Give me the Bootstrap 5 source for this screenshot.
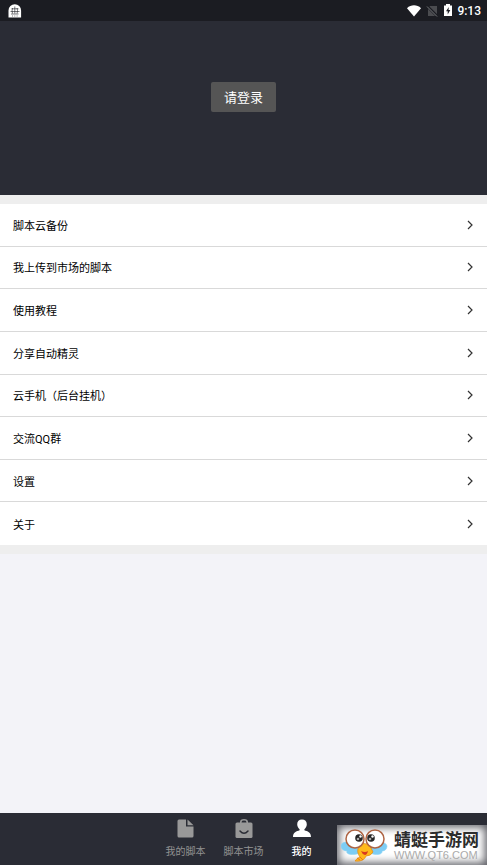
<!DOCTYPE html>
<html lang="zh-CN">
<head>
<meta charset="utf-8">
<meta name="viewport" content="width=device-width, initial-scale=1">
<title>我的</title>
<link href="https://cdn.jsdelivr.net/npm/bootstrap@5.3.0/dist/css/bootstrap.min.css" rel="stylesheet">
<style>
body{font-family:Roboto,"Noto Sans CJK SC",sans-serif;background:#f3f3f8}
.status-bar{height:21px;background:#1b1c22;padding:0 6px 0 8px}
.clock{font-size:12px;font-weight:500;line-height:20px}
.profile{height:174px;background:#2a2c35;padding-top:61px}
.login{background:#555;color:#fff;font-size:13px;line-height:18px;padding:7px 13px 5px;border:0;border-radius:2px}
.login:hover{background:#666;color:#fff}
.menu-band{background:#eeeeee;padding:9px 0}
.menu{display:grid;grid-auto-rows:1fr;min-height:341px}
.menu .menu-row{background:#fff;color:#000;font-size:11px;line-height:16px;padding:0 13px;border:0;border-bottom:1px solid #d9d9d9}
.menu .menu-row:last-child{border-bottom:0}
.tabs{background:#2a2c35;min-height:52px}
.tab-item{width:58px;color:#929292;font-size:10px;line-height:14px;padding-top:6px;gap:7px}
.tab-item.current{color:#fff;font-weight:500}
.brand-mark{right:0;bottom:0;width:150px;height:40px;background:#fff;box-shadow:inset 0 0 8px 2px #55565d;padding-left:4px;gap:5px}
.brand-name{font-size:17px;font-weight:700;line-height:20px;color:#2d2d2d}
.brand-url{font-family:"Liberation Sans",sans-serif;font-size:11px;line-height:11px;color:#aaa}
</style>
<script src="https://cdn.jsdelivr.net/npm/bootstrap@5.3.0/dist/js/bootstrap.bundle.min.js"></script>
</head>
<body class="d-flex flex-column min-vh-100 position-relative">
<header>
  <div class="status-bar d-flex align-items-center justify-content-between text-white">
    <svg width="14" height="14" viewBox="0 0 14 14" aria-hidden="true"><path d="M.5 13.500V6.500a6.300 6.300 0 0 1 12.600 0v7z" fill="#fff"/><path d="M2.500 7.500h9M3.500 4.800h7M6.800 2.500v7M4.500 4q-.8 2.500 0 5.500M9.100 4q.8 2.500 0 5.500M3 10h7.500M4 12h1M6.300 12h1M8.600 12h1" fill="none" stroke="#1b1c22" stroke-width=".6"/></svg>
    <div class="d-flex align-items-center">
      <svg class="me-1" width="14" height="12" viewBox="0 0 14 12" aria-hidden="true"><path d="M0 3.200C4-.6 10-.6 14 3.200L7 11.500z" fill="#fff"/></svg>
      <svg class="me-1" width="14" height="12" viewBox="0 0 14 12" aria-hidden="true"><path d="M5 1h7v10H3V3z" fill="#4b4c50"/><path d="M2 1l10 10" stroke="#1b1c22" stroke-width="2.600"/><path d="M2 1.500l10 10" stroke="#77787b" stroke-width="1"/></svg>
      <svg class="me-1" width="10" height="13" viewBox="0 0 10 13" aria-hidden="true"><path d="M3 0h4v1.500h2V12H1V1.500h2z" fill="#fff"/><path d="M5.800 3L3 7.200h1.700v3.300L7.300 6H5.500z" fill="#1b1c22"/></svg>
      <span class="clock">9:13</span>
    </div>
  </div>
  <div class="profile text-center"><button type="button" class="btn login">请登录</button></div>
</header>
<main class="flex-grow-1">
  <div class="menu-band">
    <nav class="menu" aria-label="功能">
      <a href="#" class="menu-row d-flex align-items-center justify-content-between text-decoration-none"><span class="pt-1">脚本云备份</span><svg width="8" height="10" viewBox="0 0 8 10" aria-hidden="true"><path d="M2 1l4 4-4 4" fill="none" stroke="#333" stroke-width="1.200"/></svg></a>
      <a href="#" class="menu-row d-flex align-items-center justify-content-between text-decoration-none"><span class="pt-1">我上传到市场的脚本</span><svg width="8" height="10" viewBox="0 0 8 10" aria-hidden="true"><path d="M2 1l4 4-4 4" fill="none" stroke="#333" stroke-width="1.200"/></svg></a>
      <a href="#" class="menu-row d-flex align-items-center justify-content-between text-decoration-none"><span class="pt-1">使用教程</span><svg width="8" height="10" viewBox="0 0 8 10" aria-hidden="true"><path d="M2 1l4 4-4 4" fill="none" stroke="#333" stroke-width="1.200"/></svg></a>
      <a href="#" class="menu-row d-flex align-items-center justify-content-between text-decoration-none"><span class="pt-1">分享自动精灵</span><svg width="8" height="10" viewBox="0 0 8 10" aria-hidden="true"><path d="M2 1l4 4-4 4" fill="none" stroke="#333" stroke-width="1.200"/></svg></a>
      <a href="#" class="menu-row d-flex align-items-center justify-content-between text-decoration-none"><span class="pt-1">云手机（后台挂机）</span><svg width="8" height="10" viewBox="0 0 8 10" aria-hidden="true"><path d="M2 1l4 4-4 4" fill="none" stroke="#333" stroke-width="1.200"/></svg></a>
      <a href="#" class="menu-row d-flex align-items-center justify-content-between text-decoration-none"><span class="pt-1">交流QQ群</span><svg width="8" height="10" viewBox="0 0 8 10" aria-hidden="true"><path d="M2 1l4 4-4 4" fill="none" stroke="#333" stroke-width="1.200"/></svg></a>
      <a href="#" class="menu-row d-flex align-items-center justify-content-between text-decoration-none"><span class="pt-1">设置</span><svg width="8" height="10" viewBox="0 0 8 10" aria-hidden="true"><path d="M2 1l4 4-4 4" fill="none" stroke="#333" stroke-width="1.200"/></svg></a>
      <a href="#" class="menu-row d-flex align-items-center justify-content-between text-decoration-none"><span class="pt-1">关于</span><svg width="8" height="10" viewBox="0 0 8 10" aria-hidden="true"><path d="M2 1l4 4-4 4" fill="none" stroke="#333" stroke-width="1.200"/></svg></a>
    </nav>
  </div>
</main>
<nav class="tabs d-flex justify-content-center" aria-label="主导航">
  <a href="#" class="tab-item d-flex flex-column align-items-center text-decoration-none">
    <svg width="20" height="19" viewBox="0 0 20 19" aria-hidden="true"><path d="M3 .5h7v7h7.500V17q0 1.500-1.500 1.500H3Q1.500 18.500 1.500 17V2Q1.500.5 3 .5zM11.500.5l6 5.800h-6z" fill="#999"/></svg>
    我的脚本</a>
  <a href="#" class="tab-item d-flex flex-column align-items-center text-decoration-none">
    <svg width="20" height="19" viewBox="0 0 20 19" aria-hidden="true"><path d="M6.800 4.500V3Q6.800 .8 10 .8T13.200 3v1.500" fill="none" stroke="#999" stroke-width="1.600"/><rect x="1.500" y="3.500" width="17" height="15.500" rx="1.500" fill="#999"/><path d="M6 12q4 4.500 8 0" fill="none" stroke="#2a2c35" stroke-width="1.500" stroke-linecap="round"/></svg>
    脚本市场</a>
  <a href="#" class="tab-item current d-flex flex-column align-items-center text-decoration-none" aria-current="page">
    <svg width="20" height="19" viewBox="0 0 20 19" aria-hidden="true"><path d="M10 .5c3 0 4.800 2 4.800 4.800 0 2-1 3.900-2.400 4.900v1c3 1 6.600 2 6.600 6.800H1c0-4.800 3.600-5.800 6.600-6.800v-1C6.200 9.200 5.200 7.300 5.200 5.300 5.200 2.500 7 .5 10 .5z" fill="#fff"/></svg>
    我的</a>
</nav>
<div class="brand-mark position-absolute d-flex align-items-center">
  <svg class="flex-shrink-0" width="48" height="40" viewBox="0 0 48 40" aria-hidden="true">
    <path d="M20 23C10 15 0 16 0 21c0 3 3 5 6 5-2 4 8 5 15 1zM28 23c8-7 17-7 18-2 0 3-2 5-5 5 1 4-7 5-14 1z" fill="#7dcdf5" stroke="#8fd5f5" stroke-width=".6"/>
    <path d="M18 21q5-5 11 0l3 6q-2 4-7 4-2 6-11 5 2-3 5-4-4-5-1-11z" fill="#ffb91b" stroke="#e58c18" stroke-width=".8"/>
    <path d="M20 26q4 2 7 0-1 4-3 4-3-1-4-4z" fill="#d83a1f"/><path d="M19 32l3 3M16 33l3 2" stroke="#ed7518" stroke-width="1"/>
    <circle cx="14" cy="14" r="9" fill="#fff" stroke="#ae6443" stroke-width="1.500"/><circle cx="34" cy="14" r="9" fill="#fff" stroke="#ae6443" stroke-width="1.500"/>
    <circle cx="18" cy="13" r="3.800" fill="#242424"/><circle cx="30" cy="13" r="3.800" fill="#242424"/>
    <circle cx="17" cy="14" r="1.300" fill="#aaa"/><circle cx="29" cy="14" r="1.300" fill="#aaa"/><circle cx="19.500" cy="11.500" r="1.200" fill="#fff"/><circle cx="31.500" cy="11.500" r="1.200" fill="#fff"/>
  </svg>
  <div><div class="brand-name">蜻蜓手游网</div><div class="brand-url">WWW.QT6.COM</div></div>
</div>
</body>
</html>
